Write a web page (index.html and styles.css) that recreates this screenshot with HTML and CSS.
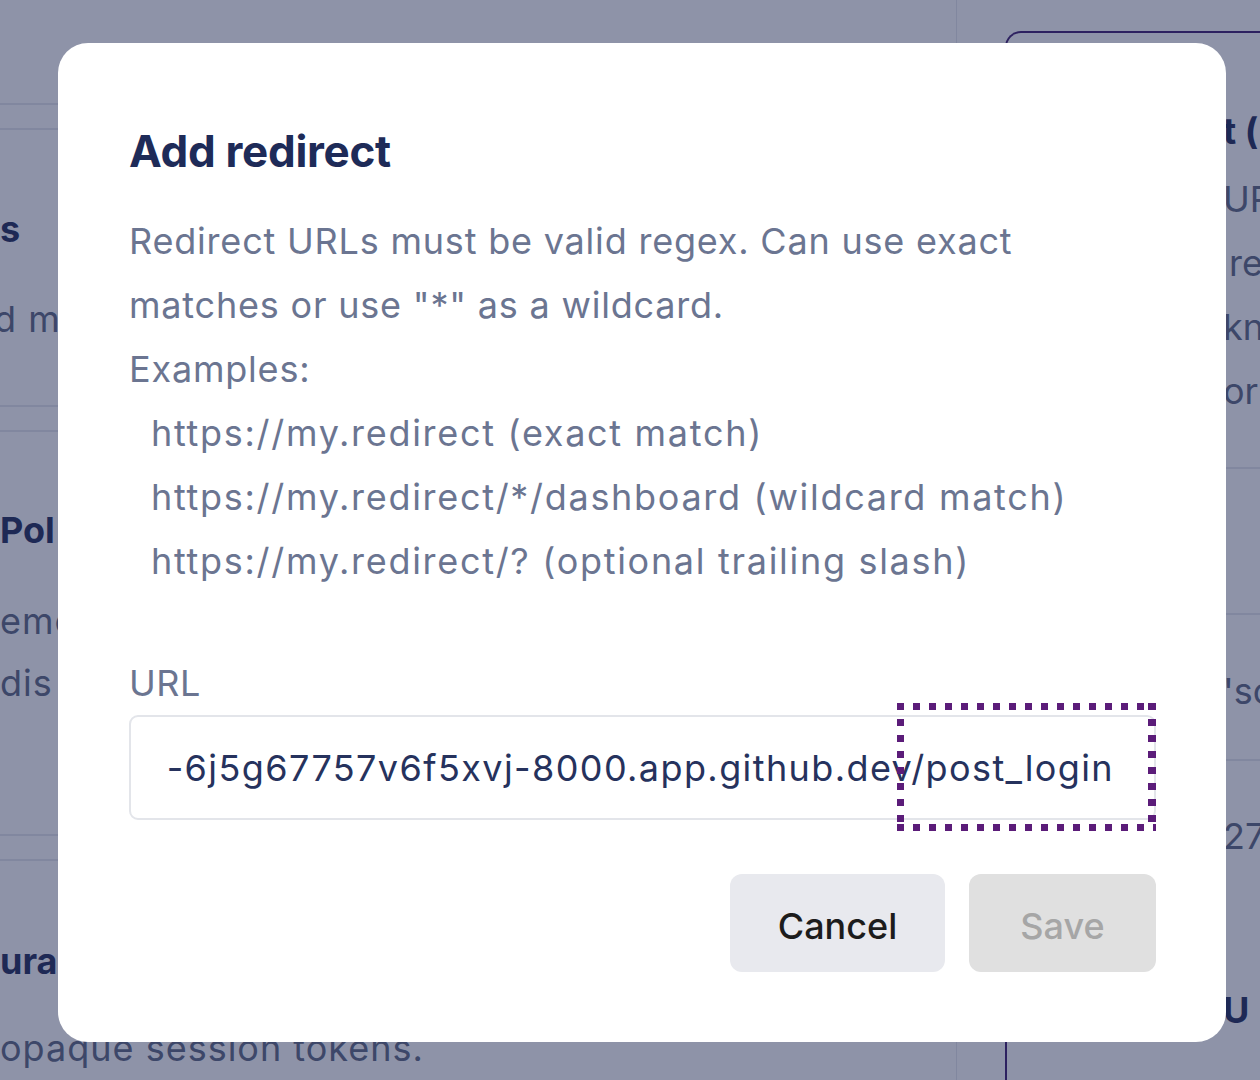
FILE: index.html
```html
<!DOCTYPE html>
<html lang="en">
<head>
<meta charset="utf-8">
<title>Add redirect</title>
<link rel="stylesheet" href="styles.css">
</head>
<body>
<div class="page">
  <main class="bg-left">
    <div class="bg-top"></div>
    <div class="bg-band"></div>
    <section class="bg-sec sec1">
      <h2 class="bg-h">s</h2>
      <p class="bg-p shift">d m</p>
    </section>
    <div class="bg-band"></div>
    <section class="bg-sec sec2">
      <h2 class="bg-h">Pol</h2>
      <p class="bg-p">eme</p>
      <p class="bg-p">dis</p>
    </section>
    <div class="bg-band"></div>
    <section class="bg-sec sec3">
      <h2 class="bg-h">ura</h2>
      <p class="bg-p">opaque session tokens.</p>
    </section>
  </main>
  <aside class="bg-right">
    <div class="bg-card">
      <div class="card-top">
        <h3 class="card-h">t (</h3>
        <p class="card-p">UR</p>
        <p class="card-p">re</p>
        <p class="card-p">kn</p>
        <p class="card-p">or</p>
      </div>
      <div class="card-row"></div>
      <div class="card-row"><p class="card-p">'sc</p></div>
      <div class="card-row last">
        <p class="card-p">27</p>
        <h3 class="card-h card-u">U</h3>
      </div>
    </div>
  </aside>
</div>
<div class="overlay"></div>
<div class="modal" role="dialog" aria-labelledby="modal-title">
  <h1 class="modal-title" id="modal-title">Add redirect</h1>
  <div class="modal-desc">
    <p>Redirect URLs must be valid regex. Can use exact matches or use "*" as a wildcard.</p>
    <p>Examples:</p>
    <ul class="examples">
      <li>https://my.redirect (exact match)</li>
      <li>https://my.redirect/*/dashboard (wildcard match)</li>
      <li>https://my.redirect/? (optional trailing slash)</li>
    </ul>
  </div>
  <label class="field-label">URL</label>
  <div class="input">
    <div class="input-clip"><span class="input-text">-6j5g67757v6f5xvj-8000.app.github.dev/post_login</span></div>
    <span class="focus-ring"></span>
  </div>
  <div class="actions">
    <button class="btn btn-cancel" type="button">Cancel</button>
    <button class="btn btn-save" type="button" disabled>Save</button>
  </div>
</div>
</body>
</html>
```
FILE: styles.css
```css
* { box-sizing: border-box; }
html, body { margin: 0; padding: 0; }
body {
  width: 1260px;
  height: 1080px;
  overflow: hidden;
  background: #ffffff;
  font-family: "Inter", "Noto Sans", sans-serif;
}
p, h1, h2, h3, ul { margin: 0; padding: 0; }

/* ---------- background page ---------- */
.page {
  display: grid;
  grid-template-columns: 957px 1fr;
  height: 1080px;
}
.bg-left {
  border-right: 1px solid #e4e6ec;
  display: flex;
  flex-direction: column;
  overflow: hidden;
}
.bg-top { height: 105px; border-bottom: 2px solid #e4e6ec; flex: none; }
.bg-band { height: 25px; border-bottom: 2px solid #e4e6ec; flex: none; }
.bg-sec { flex: none; }
.bg-h {
  font-size: 36px;
  line-height: 64px;
  font-weight: 700;
  color: #1e2b58;
  white-space: nowrap;
}
.bg-p {
  font-size: 36px;
  line-height: 62px;
  letter-spacing: 1px;
  color: #5c6680;
  white-space: nowrap;
}
.shift { margin-left: -6px; }
.sec1 { height: 277px; padding-top: 67px; border-bottom: 2px solid #e4e6ec; }
.sec1 .bg-h { margin-bottom: 27px; }
.sec2 { height: 404px; padding-top: 66px; border-bottom: 2px solid #e4e6ec; }
.sec2 .bg-h { margin-bottom: 28px; }
.sec3 { padding-top: 68px; }
.sec3 .bg-h { margin-bottom: 24px; }

.bg-right { padding: 31px 0 0 48px; overflow: hidden; }
.bg-card {
  border: 2px solid #3c1a6e;
  border-right: none;
  border-bottom: none;
  border-radius: 16px 0 0 0;
  height: 1100px;
  width: 400px;
}
.card-top {
  padding: 72px 0 0 216px;
  border-bottom: 2px solid #e4e6ec;
  height: 436px;
}
.card-h {
  font-size: 36px;
  line-height: 52px;
  font-weight: 700;
  color: #1e2b58;
  white-space: nowrap;
}
.card-top .card-h { margin-bottom: 10px; }
.card-p {
  font-size: 36px;
  line-height: 64px;
  color: #5c6680;
  white-space: nowrap;
}
.card-top .card-p:nth-of-type(2) { padding-left: 6px; }
.card-row {
  height: 146px;
  border-bottom: 2px solid #e4e6ec;
  padding: 44px 0 0 216px;
}
.card-row.last { border-bottom: none; padding-top: 43px; height: auto; }
.card-u { margin-top: 116px; }

.overlay {
  position: fixed;
  inset: 0;
  background: rgba(30, 40, 82, 0.5);
}

/* ---------- modal ---------- */
.modal {
  position: fixed;
  left: 58px;
  top: 43px;
  width: 1168px;
  height: 999px;
  background: #ffffff;
  border-radius: 30px;
  padding: 82px 70px 70px 71px;
  display: flex;
  flex-direction: column;
}
.modal-title {
  font-size: 44px;
  line-height: 52px;
  font-weight: 700;
  color: #1e2b58;
  letter-spacing: -0.3px;
}
.modal-desc {
  margin-top: 32px;
  font-size: 36px;
  line-height: 64px;
  color: #6b7591;
  letter-spacing: 0.8px;
}
.modal-desc p { padding-right: 110px; }
.examples {
  list-style: none;
  padding-left: 22px;
  letter-spacing: 1.7px;
}

.field-label {
  margin-top: 59px;
  font-size: 36px;
  line-height: 63px;
  color: #6b7591;
  letter-spacing: 0.5px;
}
.input {
  position: relative;
  height: 105px;
  border: 2px solid #e3e5ea;
  border-radius: 9px;
  padding: 0 40px 0 37px;
  display: flex;
  align-items: center;
}
.input-clip {
  flex: 1;
  overflow: hidden;
  display: flex;
  justify-content: flex-end;
  white-space: nowrap;
}
.input-text {
  font-size: 36px;
  line-height: 60px;
  color: #26325d;
  letter-spacing: 1.4px;
}
.focus-ring {
  position: absolute;
  left: 766px;
  top: -14px;
  width: 259px;
  height: 128px;
  background:
    repeating-linear-gradient(90deg, #5b1c79 0 7px, transparent 7px 16px) left top / 100% 7px no-repeat,
    repeating-linear-gradient(90deg, #5b1c79 0 7px, transparent 7px 16px) left bottom / 100% 7px no-repeat,
    repeating-linear-gradient(180deg, #5b1c79 0 7px, transparent 7px 16px) left top / 7px 100% no-repeat,
    repeating-linear-gradient(180deg, #5b1c79 0 7px, transparent 7px 16px) right top / 8px 100% no-repeat;
}

.actions {
  margin-top: 54px;
  display: flex;
  justify-content: flex-end;
  gap: 24px;
}
.btn {
  height: 98px;
  border: none;
  border-radius: 12px;
  font-family: "Inter", "Noto Sans", sans-serif;
  font-size: 36px;
  font-weight: 500;
  padding: 6px 0 0;
  text-align: center;
}
.btn-cancel { background: #e8e9ee; color: #1c1c1c; width: 215px; }
.btn-save { background: #e0e0e0; color: #a6a6a6; width: 187px; }
```
